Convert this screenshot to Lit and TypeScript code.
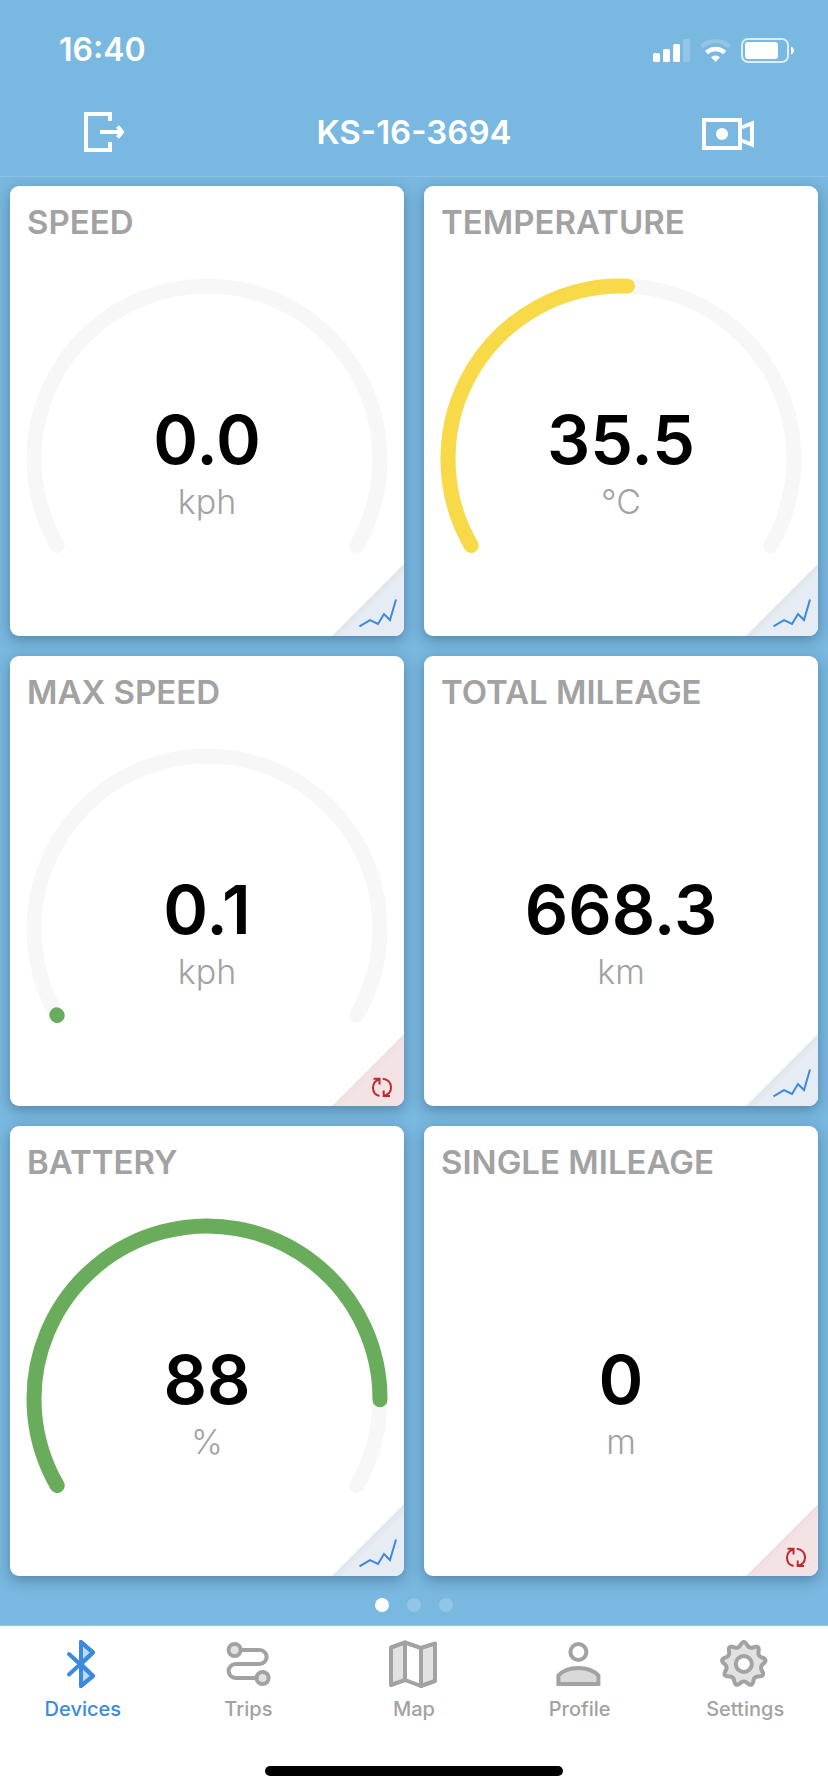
import { LitElement, html, svg, css, nothing } from "lit";
import { customElement, property, state } from "lit/decorators.js";
import { classMap } from "lit/directives/class-map.js";

type Corner = "chart" | "reset";

interface Metric {
  title: string;
  value: string;
  unit: string;
  corner: Corner;
  /** Filled share of the dial, 0 to 1; null draws no dial at all. */
  fill: number | null;
  tone?: "green" | "yellow";
}

const METRICS: Metric[] = [
  { title: "SPEED", value: "0.0", unit: "kph", corner: "chart", fill: 0 },
  { title: "TEMPERATURE", value: "35.5", unit: "°C", corner: "chart", fill: 0.509, tone: "yellow" },
  { title: "MAX SPEED", value: "0.1", unit: "kph", corner: "reset", fill: 0.001, tone: "green" },
  { title: "TOTAL MILEAGE", value: "668.3", unit: "km", corner: "chart", fill: null },
  { title: "BATTERY", value: "88", unit: "%", corner: "chart", fill: 0.876, tone: "green" },
  { title: "SINGLE MILEAGE", value: "0", unit: "m", corner: "reset", fill: null },
];

const SWEEP = 240;
const START = 150;

/** Arc of the dial from its lower left end, clockwise. */
function arc(share: number): string {
  const at = (deg: number) => {
    const a = (deg * Math.PI) / 180;
    return `${(180 + 173 * Math.cos(a)).toFixed(2)} ${(180 + 173 * Math.sin(a)).toFixed(2)}`;
  };
  const sweep = SWEEP * share;
  return `M${at(START)} A173 173 0 ${sweep > 180 ? 1 : 0} 1 ${at(START + sweep)}`;
}

/** Wavy outline with nine teeth for the settings icon. */
function gear(cx: number, cy: number): string {
  const points: string[] = [];
  for (let i = 0; i < 180; i++) {
    const t = (i / 180) * Math.PI * 2;
    const r = 17.6 + 4.4 * Math.pow((1 + Math.cos(9 * t)) / 2, 1.4);
    points.push(`${(cx + r * Math.sin(t)).toFixed(2)} ${(cy - r * Math.cos(t)).toFixed(2)}`);
  }
  return `M${points.join("L")}Z`;
}

@customElement("metric-card")
export class MetricCard extends LitElement {
  @property({ attribute: false }) metric!: Metric;

  static styles = css`
    :host {
      display: block;
      position: relative;
      box-sizing: border-box;
      padding: 16px 17px 82px;
      border-radius: 9px;
      background: #fff;
      box-shadow: 0 4px 14px rgba(30, 60, 90, 0.42);
    }
    .title {
      margin: 0 0 37px;
      font-size: 33px;
      line-height: 40px;
      font-weight: 600;
      color: #a2a2a2;
      white-space: nowrap;
    }
    .dial {
      display: grid;
      aspect-ratio: 360 / 275;
    }
    .gauge,
    .readout {
      grid-area: 1 / 1;
    }
    .gauge {
      display: block;
      width: 100%;
      height: 100%;
      overflow: visible;
      fill: none;
      stroke-width: 15;
      stroke-linecap: round;
    }
    .track {
      stroke: #f7f7f7;
    }
    .green {
      stroke: #68ac5c;
    }
    .yellow {
      stroke: #f8da49;
    }
    .readout {
      align-self: end;
      margin: 0;
      padding-bottom: 32px;
      text-align: center;
    }
    .value,
    .unit {
      display: block;
    }
    .value {
      font-size: 68px;
      line-height: 78px;
      font-weight: 600;
      color: #000;
    }
    .unit {
      margin-top: 4px;
      font-size: 34px;
      line-height: 40px;
      font-weight: 300;
      color: #a2a2a2;
    }
    .corner {
      position: absolute;
      right: 0;
      bottom: 0;
      width: 72px;
      height: 72px;
      padding: 0;
      border: 0;
      border-radius: 0 0 9px 0;
      clip-path: polygon(100% 0, 100% 100%, 0 100%);
      cursor: pointer;
    }
    .chart {
      background: linear-gradient(135deg, #dfe5ea 50%, #e5ecf3 57%);
      color: #3b8adb;
    }
    .reset {
      background: linear-gradient(135deg, #efdfe0 50%, #f4e3e5 57%);
      color: #c1272d;
    }
    .glyph {
      display: block;
      fill: none;
      stroke: currentColor;
      stroke-width: 2;
    }
  `;

  private glyph(kind: Corner) {
    return kind === "chart"
      ? svg`<path d="M27.5 62.3 38 56.2 46 60 52 50 58 56 64 35.5" />`
      : svg`<path d="M47.5 62C43.5 61.2 41 57.8 41 53.5C41 49.5 43.8 46 47.3 45.2M41.5 44.7H47.5V50.5M50.8 44.7C55.8 45 59 48.8 59 53.3C59 57.3 56.5 60.6 52.5 61.6M58 62H51.7V56.5" />`;
  }

  render() {
    const m = this.metric;
    return html`
      <h2 class="title">${m.title}</h2>
      <div class="dial">
        ${m.fill === null
          ? nothing
          : html`<svg class="gauge" viewBox="0 0 360 275" aria-hidden="true">
              <path class="track" d=${arc(1)} />
              ${m.fill > 0 ? svg`<path class=${m.tone ?? "green"} d=${arc(m.fill)} />` : nothing}
            </svg>`}
        <p class="readout">
          <span class="value">${m.value}</span>
          <span class="unit">${m.unit}</span>
        </p>
      </div>
      <button
        class="corner ${m.corner}"
        type="button"
        aria-label=${m.corner === "chart" ? `${m.title} history` : `Reset ${m.title}`}
      >
        <svg class="glyph" width="72" height="72" viewBox="0 0 72 72" aria-hidden="true">
          ${this.glyph(m.corner)}
        </svg>
      </button>
    `;
  }
}

const TABS = [
  {
    label: "Devices",
    icon: svg`<path class="tint" d="M22 2 34 12.5 22 24ZM22 24 34 36 22 46Z" /><path d="M10 14 34 36 22 46V2L34 12.5 10 34.5" />`,
  },
  {
    label: "Trips",
    icon: svg`<path d="M16 10H35.6a7 7 0 0 1 0 14H11.6a7 7 0 0 0 0 14H33" /><circle class="tint" cx="10.6" cy="10" r="6" /><circle class="tint" cx="38.6" cy="38" r="6" />`,
  },
  {
    label: "Map",
    icon: svg`<path class="tint" d="M1 7.5 15 2.5V40L1 45ZM31 8 45 3.5V41L31 46Z" /><path d="M15 2.5 31 8M15 40 31 46" />`,
  },
  {
    label: "Profile",
    icon: svg`<circle cx="22.4" cy="12" r="8" /><path class="tint dark square" d="M2.4 44V35.5C7 30.5 14 28 22.4 28S37.8 30.5 42.4 35.5V44Z" />`,
  },
  {
    label: "Settings",
    icon: svg`<path class="tint" d=${gear(22.8, 24)} /><circle class="hole" cx="22.8" cy="24" r="8" />`,
  },
];

@customElement("app-root")
export class AppRoot extends LitElement {
  @state() private tab = 0;
  @state() private page = 0;

  static styles = css`
    :host {
      display: flex;
      flex-direction: column;
      min-height: 100vh;
      background: #79b8e0;
      font-family: Inter, "Liberation Sans", sans-serif;
      color: #fff;
    }
    button {
      border: 0;
      padding: 0;
      background: none;
      font: inherit;
      color: inherit;
      cursor: pointer;
    }
    svg {
      display: block;
    }
    .status {
      display: flex;
      align-items: center;
      justify-content: space-between;
      height: 76px;
      padding: 12px 34px 0 59px;
    }
    .time {
      font-size: 32px;
      line-height: 40px;
      font-weight: 600;
    }
    .signals {
      display: flex;
      gap: 10px;
      fill: #fff;
    }
    .faint {
      opacity: 0.2;
    }
    .outline {
      fill: none;
      stroke: #fff;
      stroke-width: 2;
      opacity: 0.75;
    }
    .nav {
      display: grid;
      grid-template-columns: 1fr auto 1fr;
      align-items: center;
      height: 88px;
      padding: 0 74px;
      border-bottom: 1px solid #8bc1e4;
    }
    .name {
      margin: 0;
      font-size: 33px;
      line-height: 40px;
      font-weight: 600;
    }
    .line-icon {
      fill: none;
      stroke: #fff;
      stroke-width: 4;
    }
    .solid {
      fill: #fff;
      stroke: none;
    }
    .camera {
      justify-self: end;
      margin-top: 4px;
    }
    .exit {
      justify-self: start;
      padding: 0 10px;
    }
    .cards {
      display: grid;
      grid-template-columns: 1fr 1fr;
      gap: 20px;
      padding: 9px 10px 0;
    }
    .pager {
      display: flex;
      justify-content: center;
      gap: 18px;
      padding: 22px 0 13px;
      border-bottom: 1px solid #93c6e6;
    }
    .dot {
      width: 14px;
      height: 14px;
      border-radius: 50%;
      background: #93c6e6;
    }
    .dot.current {
      background: #fff;
    }
    .bottom {
      display: flex;
      flex-direction: column;
      flex: 1;
      justify-content: space-between;
      background: #fff;
    }
    .tabs {
      display: grid;
      grid-template-columns: repeat(5, 1fr);
      padding-top: 14px;
    }
    .tab {
      display: flex;
      flex-direction: column;
      align-items: center;
      gap: 9px;
      font-size: 20px;
      line-height: 24px;
      font-weight: 500;
      color: #a2a2a2;
    }
    .tab.active {
      color: #3b8adb;
    }
    .tab-icon {
      overflow: visible;
      fill: none;
      stroke: currentColor;
      stroke-width: 4;
      stroke-linecap: round;
      stroke-linejoin: round;
    }
    .tint {
      fill: #e2e2e2;
    }
    .dark {
      fill: #d9d9d9;
    }
    .active .tint {
      fill: #bddaf5;
    }
    .hole {
      fill: #fff;
    }
    .square {
      stroke-linejoin: miter;
    }
    .home {
      align-self: center;
      width: 36%;
      height: 10px;
      margin: 40px 0 16px;
      border-radius: 5px;
      background: #000;
    }
  `;

  render() {
    return html`
      <div class="status">
        <span class="time">16:40</span>
        <div class="signals" aria-hidden="true">
          <svg width="37" height="25" viewBox="0 0 37 25">
            <rect x="0" y="15" width="7" height="9" rx="1.5" />
            <rect x="10" y="11" width="7" height="13" rx="1.5" />
            <rect x="20" y="6" width="7" height="18" rx="1.5" />
            <rect class="faint" x="30" y="1" width="7" height="23" rx="1.5" />
          </svg>
          <svg width="31" height="25" viewBox="0 0 31 25">
            <path class="faint" d="M0 7.3A22 22 0 0 1 31 7.3L28 10.3A17.5 17.5 0 0 0 3 10.3Z" />
            <path d="M5 13A15.4 15.4 0 0 1 26.2 13L23.2 16.3A11 11 0 0 0 8 16.3Z" />
            <path d="M11 19.3A6.5 6.5 0 0 1 20 19.3L15.5 24Z" />
          </svg>
          <svg width="53" height="25" viewBox="0 0 53 25">
            <rect class="outline" x="1" y="1" width="46" height="23" rx="6" />
            <rect x="4" y="4" width="33" height="17" rx="3" />
            <path d="M50 8.5C52 9.5 53 11 53 12.5S52 15.5 50 16.5Z" />
          </svg>
        </div>
      </div>

      <header class="nav">
        <button class="exit" type="button" aria-label="Disconnect">
          <svg class="line-icon" width="40" height="40" viewBox="0 0 40 40">
            <path d="M26 9V2H2V38H26V30" />
            <path d="M16 20H38M33.5 14.5 38 20 33.5 25.5" />
          </svg>
        </button>
        <h1 class="name">KS-16-3694</h1>
        <button class="camera" type="button" aria-label="Record video">
          <svg class="line-icon" width="52" height="32" viewBox="0 0 52 32">
            <rect x="2" y="2" width="36" height="28" />
            <path d="M38 10 50 5.5V26.5L38 22" />
            <circle class="solid" cx="20" cy="16" r="6" />
          </svg>
        </button>
      </header>

      <main class="cards">
        ${METRICS.map((m) => html`<metric-card .metric=${m}></metric-card>`)}
      </main>

      <div class="pager">
        ${[0, 1, 2].map(
          (i) => html`<button
            type="button"
            class=${classMap({ dot: true, current: i === this.page })}
            aria-label="Page ${i + 1}"
            @click=${() => (this.page = i)}
          ></button>`
        )}
      </div>

      <div class="bottom">
        <nav class="tabs">
          ${TABS.map(
            (t, i) => html`<button
              type="button"
              class=${classMap({ tab: true, active: i === this.tab })}
              @click=${() => (this.tab = i)}
            >
              <svg class="tab-icon" width="48" height="48" viewBox="0 0 48 48" aria-hidden="true">
                ${t.icon}
              </svg>
              <span>${t.label}</span>
            </button>`
          )}
        </nav>
        <div class="home"></div>
      </div>
    `;
  }
}
